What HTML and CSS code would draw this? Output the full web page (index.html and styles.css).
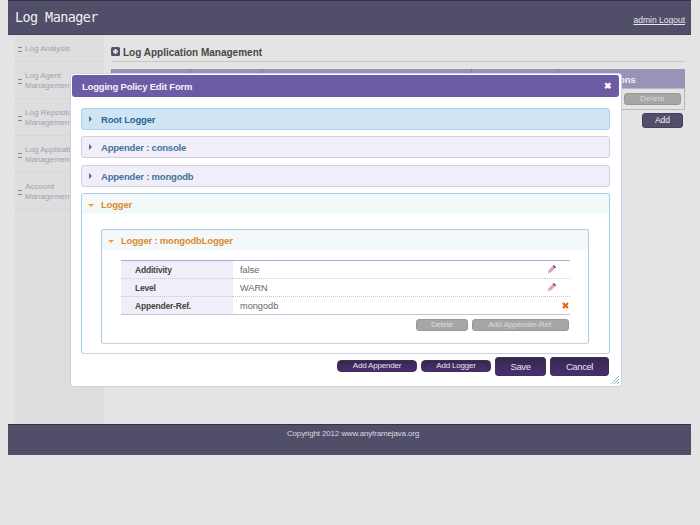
FILE: index.html
```html
<!DOCTYPE html>
<html lang="en">
<head>
  <meta charset="UTF-8">
  <title>Log Manager</title>
  <link rel="stylesheet" href="styles.css">
</head>
<body>
<div class="page">
  <header class="top">
    <h1>Log Manager</h1>
    <a href="#">admin Logout</a>
  </header>
  <div class="middle">
    <nav class="side">
      <a href="#">Log Analysis</a>
      <a href="#" class="two">Log Agent<br>Management</a>
      <a href="#" class="two">Log Repository<br>Management</a>
      <a href="#" class="two">Log Application<br>Management</a>
      <a href="#" class="two">Account<br>Management</a>
    </nav>
    <main class="content">
      <h2>
        <svg class="plus" width="9" height="9" viewBox="0 0 9 9"><rect width="9" height="9" rx="1.500" fill="#55536c"/><path d="M4.500 2v5M2 4.500h5" stroke="#e4e4e4" stroke-width="2"/></svg>
        Log Application Management
      </h2>
      <table class="list">
        <tr>
          <th class="c1"></th>
          <th class="c2"></th>
          <th class="c3"></th>
          <th class="c4"></th>
          <th class="c5">Actions</th>
        </tr>
        <tr>
          <td></td>
          <td></td>
          <td></td>
          <td></td>
          <td class="acts"><button class="grey">Edit</button><button class="grey">Delete</button></td>
        </tr>
      </table>
      <div class="add-row"><button class="slate">Add</button></div>
    </main>
  </div>
  <footer class="bottom">Copyright 2012 www.anyframejava.org</footer>
</div>

<div class="modal">
  <div class="modal-title">
    <span>Logging Policy Edit Form</span>
    <span class="close">✖</span>
  </div>
  <div class="modal-body">
    <div class="acc root"><i class="right"></i>Root Logger</div>
    <div class="acc"><i class="right"></i>Appender : console</div>
    <div class="acc"><i class="right"></i>Appender : mongodb</div>
    <div class="open">
      <div class="open-head"><i class="down"></i>Logger</div>
      <div class="open-body">
        <div class="open inner">
          <div class="open-head"><i class="down"></i>Logger : mongodbLogger</div>
          <div class="inner-body">
            <table class="props">
              <tr>
                <th>Additivity</th>
                <td>false</td>
                <td class="ico">
                  <svg width="10" height="10" viewBox="0 0 10 10"><path d="M1 9l.6-2.800L6.800 1 9 3.200 3.800 8.400z" fill="#e09ac8"/><path d="M6.800 1L9 3.200 8 4.200 5.800 2z" fill="#5a4a6a"/></svg>
                </td>
              </tr>
              <tr>
                <th>Level</th>
                <td>WARN</td>
                <td class="ico">
                  <svg width="10" height="10" viewBox="0 0 10 10"><path d="M1 9l.6-2.800L6.800 1 9 3.200 3.800 8.400z" fill="#e09ac8"/><path d="M6.800 1L9 3.200 8 4.200 5.800 2z" fill="#5a4a6a"/></svg>
                </td>
              </tr>
              <tr>
                <th>Appender-Ref.</th>
                <td>mongodb</td>
                <td class="ico del">
                  <svg width="7" height="7" viewBox="0 0 7 7"><path d="M1 1l5 5M6 1L1 6" stroke="#e8620c" stroke-width="2.200"/></svg>
                </td>
              </tr>
            </table>
            <div class="inner-btns">
              <button class="grey wide1">Delete</button>
              <button class="grey wide2">Add Appender-Ref.</button>
            </div>
          </div>
        </div>
      </div>
    </div>
    <div class="modal-btns">
      <button class="dark small b1">Add Appender</button>
      <button class="dark small b2">Add Logger</button>
      <button class="dark big b3">Save</button>
      <button class="dark big b4">Cancel</button>
    </div>
  </div>
  <svg class="grip" width="10" height="10" viewBox="0 0 10 10"><path d="M1 9l8-8M4 9l5-5M7 9l2-2" stroke="#8fb4cc" fill="none"/></svg>
</div>
</body>
</html>
```

FILE: styles.css
```css
* {
  box-sizing: border-box;
}

body {
  margin: 0;
  background: #e4e4e4;
  font-family: "Liberation Sans", Arial, sans-serif;
  font-size: 10px;
  height: 525px;
  overflow: hidden;
}

button {
  font-family: inherit;
  padding: 0;
  cursor: pointer;
}

.page {
  width: 683px;
  margin-left: 8px;
}

.top {
  height: 35px;
  background: #504e68;
  border-top: 1px solid #33324a;
  border-bottom: 1px solid #44425c;
  display: flex;
  justify-content: space-between;
  padding: 0 6px 0 7px;
}

.top h1 {
  margin: 8px 0 0;
  color: #f0f0f4;
  font: normal 13.500px "DejaVu Sans Mono", monospace;
  letter-spacing: -.6px;
}

.top a {
  color: #e8e8ee;
  font-size: 8.500px;
  margin-top: 14px;
}

.middle {
  display: flex;
  height: 389px;
  padding-left: 7px;
}

.side {
  width: 89px;
  background: #dedede;
}

.side a {
  display: flex;
  align-items: center;
  height: 27px;
  padding: 2px 0 0 10px;
  color: #a0a0b4;
  font-size: 8px;
  line-height: 10px;
  text-decoration: none;
  border-bottom: 1px dotted #cfcfcf;
  position: relative;
}

.side a.two {
  height: 37px;
}

.side a::before {
  content: "";
  position: absolute;
  left: 3px;
  top: 50%;
  width: 4px;
  height: 3px;
  margin-top: -1px;
  border-top: 1px solid #88889c;
  border-bottom: 1px solid #88889c;
}

.content {
  width: 581px;
  padding: 11px 0 0 7px;
}

.content h2 {
  margin: 0;
  height: 16px;
  border-bottom: 1px solid #c8c8c8;
  color: #484848;
  font-size: 10px;
  line-height: 14px;
  display: flex;
  align-items: flex-start;
}

.plus {
  margin: 1px 3px 0 0;
}

.list {
  width: 574px;
  margin-top: 7px;
  border-collapse: collapse;
  table-layout: fixed;
}

.list th {
  height: 19px;
  background: #9a93b8;
  color: #eeeef4;
  font-size: 9.500px;
  border-left: 1px solid #85809f;
  padding: 2px 0 0;
}

.list .c5 {
  text-align: left;
  padding-left: 42px;
}

.list td {
  height: 21px;
  border: 1px solid #b8b8c4;
  padding: 0;
}

.c1 { width: 79px; }
.c2 { width: 72px; }
.c3 { width: 209px; }
.c4 { width: 87px; }

.acts {
  text-align: right;
  padding-right: 3px !important;
}

.grey {
  height: 12px;
  background: #a6a6a6;
  border: 1px solid #979797;
  border-radius: 3px;
  color: #dcdcdc;
  font-size: 8px;
  letter-spacing: -.2px;
  line-height: 10px;
}

.acts .grey {
  width: 57px;
  margin-left: 2px;
  letter-spacing: .3px;
}

.add-row {
  display: flex;
  justify-content: flex-end;
  padding: 3px 2px 0 0;
}

.slate {
  width: 41px;
  height: 15px;
  background: #504e68;
  border: 1px solid #44425c;
  border-radius: 3px;
  color: #f0f0f4;
  font-size: 8.500px;
}

.bottom {
  height: 31px;
  background: #504e68;
  border-top: 1px solid #33324a;
  color: #d8d8e0;
  font-size: 8px;
  letter-spacing: -.15px;
  text-align: center;
  padding: 4px 0 0 7px;
}

.modal {
  position: absolute;
  left: 70px;
  top: 73px;
  width: 552px;
  height: 314px;
  background: #fff;
  border: 1px solid #cfcfe4;
  border-radius: 3px;
  padding: 1px 2px 1px 1px;
}

.modal-title {
  height: 22px;
  background: #6b5ca5;
  border-radius: 3px;
  color: #f2f2f8;
  font-size: 9.500px;
  letter-spacing: -.2px;
  font-weight: bold;
  display: flex;
  justify-content: space-between;
  align-items: center;
  padding: 0 7px 0 10px;
}

.close {
  font-size: 9px;
  color: #fff;
}

.modal-body {
  padding: 11px 9px 0;
}

.acc {
  height: 22px;
  margin-bottom: 6.300px;
  background: #f0eef9;
  border: 1px solid #d2cde2;
  border-radius: 3px;
  color: #45729c;
  font-size: 9.500px;
  letter-spacing: -.2px;
  font-weight: bold;
  line-height: 21px;
  padding-left: 7px;
}

.acc.root {
  background: #cfe4f4;
  border-color: #a6d2ea;
  color: #2f6690;
}

.acc i,
.open-head i {
  display: inline-block;
  width: 0;
  height: 0;
  margin-right: 9px;
  vertical-align: 1px;
}

.right {
  border-left: 3px solid #45729c;
  border-top: 3px solid transparent;
  border-bottom: 3px solid transparent;
}

.down {
  border-top: 3px solid #eda515;
  border-left: 3px solid transparent;
  border-right: 3px solid transparent;
  margin-left: -1px;
}

.open-head i.down {
  margin-right: 7px;
}

.open {
  height: 161px;
  border: 1px solid #a9cde4;
  border-bottom-color: #d2cde2;
  border-radius: 3px;
  background: #fff;
  overflow: hidden;
}

.open-head {
  height: 20px;
  background: #f3f8fa;
  color: #dd8a2c;
  font-size: 9.500px;
  letter-spacing: -.2px;
  font-weight: bold;
  line-height: 22px;
  padding-left: 7px;
}

.open-body {
  padding: 15px 20px 0 19px;
}

.open.inner {
  height: 115px;
}

.inner-body {
  padding: 10px 18px 0 19px;
}

.props {
  width: 449px;
  border-collapse: collapse;
  table-layout: fixed;
  border-top: 1px solid #b2a6dc;
  border-bottom: 1px solid #c4c4d8;
}

.props tr {
  height: 18px;
  border-bottom: 1px dotted #c8c8c8;
}

.props th {
  width: 112px;
  background: #f0eef9;
  color: #444;
  font-size: 8.500px;
  letter-spacing: -.2px;
  text-align: left;
  padding: 1px 0 0 14px;
}

.props td {
  color: #666;
  font-size: 9.200px;
  padding: 1px 0 0 7px;
}

.props .ico {
  width: 26px;
  padding: 0 0 0 3px;
  line-height: 0;
}

.props .del {
  text-align: right;
  padding: 0 1px 0 0;
}

.inner-btns {
  display: flex;
  justify-content: flex-end;
  gap: 4px;
  margin-top: 4px;
  padding-right: 1px;
}

.wide1 { width: 52px; }
.wide2 { width: 97px; }

.modal-btns {
  display: flex;
  justify-content: flex-end;
  align-items: center;
  gap: 4px;
  margin-top: 3px;
  padding-right: 1px;
}

.dark {
  background: linear-gradient(#35294f, #4b2d72);
  border: 1px solid #3c3352;
  color: #e6e4ee;
}

.small {
  height: 12px;
  border-radius: 4px;
  font-size: 8px;
  letter-spacing: -.2px;
  line-height: 10px;
}

.big {
  height: 19px;
  border-radius: 3px;
  font-size: 9.500px;
  letter-spacing: -.4px;
}

.b1 { width: 80px; }
.b2 { width: 70px; }
.b3 { width: 51px; }
.b4 { width: 59px; }

.grip {
  position: absolute;
  right: 1px;
  bottom: 1px;
}
```
